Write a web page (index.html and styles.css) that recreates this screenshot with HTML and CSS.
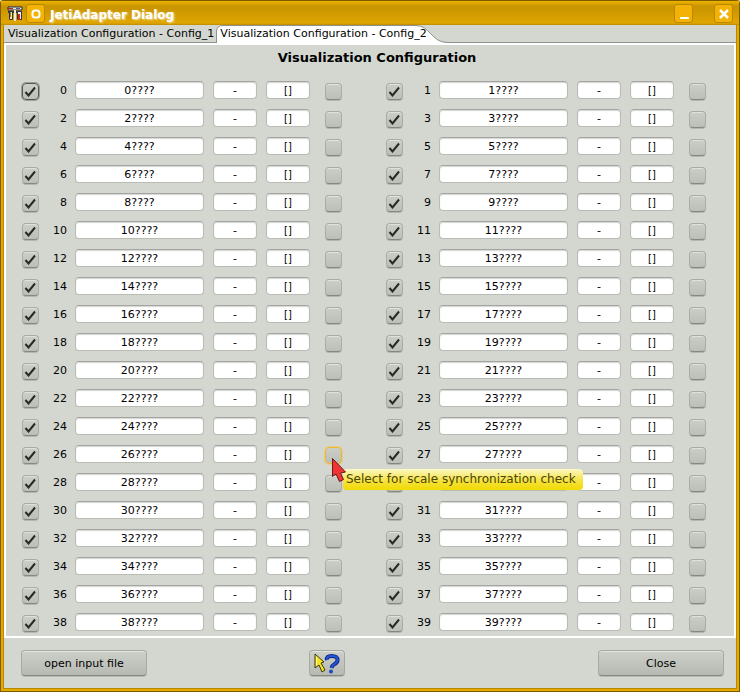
FILE: index.html
```html
<!DOCTYPE html>
<html lang="en">
<head>
<meta charset="utf-8">
<title>JetiAdapter Dialog</title>
<link rel="stylesheet" href="styles.css">
</head>
<body>
<div class="window">
  <header class="titlebar">
    <svg class="app-icon" width="16" height="16" viewBox="0 0 16 16" aria-hidden="true">
      <path d="M1 1h14v3H1z" fill="#e9ebee" stroke="#26263c"/>
      <path d="M1 2h5v1H1z" fill="#b02c20"/>
      <path d="M9 2h4v1H9z" fill="#555a80"/>
      <path d="M1 5h14v2H1z" fill="#32324a"/>
      <path d="M2.500 5.500h3v8h-3z" fill="#e8e6c8" stroke="#32324a"/>
      <path d="M3 6h1v5H3z" fill="#8d8a26"/>
      <path d="M7 4h2v11H7z" fill="#f1eec8"/>
      <path d="M10.500 5.500h4v8h-4z" fill="#f0f0f0" stroke="#32324a"/>
      <path d="M11 8h2v6h-2z" fill="#c42a26"/>
    </svg>
    <button class="win-btn" type="button" aria-label="Window menu">
      <svg width="16" height="16" viewBox="0 0 16 16"><rect x="4.500" y="4.500" width="7" height="7" rx="2.500" fill="none" stroke="#fff" stroke-width="2"/></svg>
    </button>
    <h1 class="title">JetiAdapter Dialog</h1>
    <button class="win-btn minimize" type="button" aria-label="Minimize">
      <svg width="16" height="16" viewBox="0 0 16 16"><path d="M4 12h9" stroke="#fff" stroke-width="2"/></svg>
    </button>
    <button class="win-btn" type="button" aria-label="Close window">
      <svg width="16" height="16" viewBox="0 0 16 16"><path d="M4 4l8 8M12 4l-8 8" stroke="#fff" stroke-width="2.500"/></svg>
    </button>
  </header>
  <nav class="tabs" role="tablist">
    <button class="tab" type="button" role="tab" aria-selected="false">Visualization Configuration - Config_1</button>
    <button class="tab active" type="button" role="tab" aria-selected="true">
      <svg class="tab-shape" width="232" height="18" viewBox="0 0 232 18" aria-hidden="true">
        <path d="M.5 18V6Q1 .5 7 .5H200C214 .5 215 17 231 17.500V18z" fill="#fff"/>
        <path d="M.5 18V6Q1 .5 7 .5H200C214 .5 215 17 231 17.500" fill="none" stroke="#8f928b"/>
      </svg>
      <span class="tab-text">Visualization Configuration - Config_2</span>
    </button>
  </nav>
  <main class="pane" role="tabpanel">
    <h2 class="heading">Visualization Configuration</h2>
    <div class="channels" id="channels"></div>
  </main>
  <footer class="actions">
    <button class="action" type="button">open input file</button>
    <button class="help" type="button" aria-label="Help">
      <svg width="28" height="22" viewBox="0 0 28 22">
        <path d="M2 2l9 8-3 1 4 7-3 2-3-7-4 3z" fill="#f4e522" stroke="#39380c"/>
        <path d="M3.500 5v8" stroke="#fffba0"/>
        <path d="M14 8Q13 4 18.500 4Q25 4 24.500 8.500Q24 11 21 12.500Q19 13.500 18.500 16" fill="none" stroke="#102a80" stroke-width="4"/>
        <path d="M14 8Q13 4 18.500 4Q25 4 24.500 8.500Q24 11 21 12.500Q19 13.500 18.500 16" fill="none" stroke="#2356dc" stroke-width="2"/>
        <circle cx="18" cy="19.500" r="2" fill="#1d49c4"/>
      </svg>
    </button>
    <button class="action close" type="button">Close</button>
  </footer>
</div>
<script src="channels.js"></script>
</body>
</html>
```
FILE: styles.css
```css
* { box-sizing: border-box; }

body {
  margin: 0;
  background: #d4d7d0;
  color: #000;
  font-family: "DejaVu Sans", sans-serif;
  font-size: 11px;
}

button, input { font: inherit; color: inherit; margin: 0; padding: 0; }
svg { display: block; }

.window {
  display: flex;
  flex-direction: column;
  min-height: 100vh;
  padding: 1px 4px 4px;
  background: #d4d7d0;
  border-radius: 4px 4px 0 0;
  box-shadow: inset 0 0 0 1px #7d5c00, inset 0 0 0 3px #e5aa00, inset 0 0 0 4px #b98700;
}

.titlebar {
  display: flex;
  align-items: center;
  height: 24px;
  margin: 0 -3px;
  padding: 1px 6px 0;
  background: linear-gradient(#f0b400 0, #c99500 5px, #c99500 7px, #e0a600 22px, #bd8b00 24px);
}

.app-icon { margin-right: 3px; }

.win-btn {
  display: grid;
  place-items: center;
  width: 19px;
  height: 19px;
  background: #f3b306;
  border: 1px solid #bd8700;
  border-radius: 3px;
}

.minimize { margin-right: 21px; }

.title {
  flex: 1;
  margin: 3px 0 0 5px;
  color: #fff;
  font-size: 12px;
  line-height: 16px;
  text-shadow: 1px 1px 2px #f7e3a8;
}

.tabs {
  display: flex;
  height: 18px;
  border-bottom: 1px solid #8f928b;
}

.tab {
  position: relative;
  height: 18px;
  padding: 0 2px 0 4px;
  border: 0;
  background: none;
  line-height: 18px;
  white-space: nowrap;
}

.tab-shape { position: absolute; left: 0; top: 0; }
.tab-text { position: relative; }

.pane {
  border: 2px solid #fff;
  padding: 0 28px 0 16px;
}

.heading {
  margin: 0;
  padding: 5px 0 10px 26px;
  font-size: 13px;
  line-height: 16px;
  text-align: center;
}

.channels {
  display: grid;
  grid-template-columns: 1fr 1fr;
  column-gap: 44px;
}

.channel {
  display: flex;
  align-items: center;
  height: 28px;
}

.number {
  width: 36px;
  padding-right: 8px;
  text-align: right;
}

.field {
  width: 44px;
  height: 18px;
  margin-right: 9px;
  background: #fff;
  border: 1px solid #b9bbb5;
  border-top-color: #a3a5a0;
  border-radius: 4px;
  box-shadow: inset 0 1px 1px #d5d5d5;
  text-align: center;
}

.name { flex: 1; min-width: 0; }
.unit { margin-right: 15px; font-size: 10px; }

.check {
  position: relative;
  width: 17px;
  height: 17px;
  margin-top: 3px;
}

.check input {
  display: block;
  appearance: none;
  width: 17px;
  height: 17px;
  border: 1px solid #a9aba5;
  border-bottom-color: #858781;
  border-radius: 4px;
  background: linear-gradient(#cbcdc7, #bcbeb8);
  box-shadow: inset 0 1px 0 #e0e2dc, 0 1px 0 #b3b5af;
}

.check input.focused {
  border-color: #555751;
  box-shadow: 0 0 0 1px #9a9c96;
}

.check input.hovered {
  border-color: #eeb82a;
  box-shadow: 0 0 0 1px #e2ce8b;
}

.tick { position: absolute; left: 2px; top: 3px; pointer-events: none; }

.pointer {
  position: absolute;
  z-index: 3;
  left: 7px;
  top: 11px;
}

.tooltip {
  position: absolute;
  z-index: 2;
  left: 18px;
  top: 22px;
  padding: 0 7px 0 3px;
  border-radius: 4px;
  background: linear-gradient(#fbf8c4, #f5e13a 60%, #f1da00);
  color: #4b4500;
  font-size: 12px;
  line-height: 21px;
  white-space: nowrap;
}

.actions {
  display: grid;
  grid-template-columns: 126px 1fr 126px;
  align-items: center;
  padding: 12px 12px 0 17px;
}

.action, .help {
  height: 26px;
  border: 1px solid #a7a9a3;
  border-bottom-color: #858781;
  border-radius: 4px;
  background: linear-gradient(#cdcfc9, #b7b9b3);
  box-shadow: inset 0 1px 0 #e2e4de, 0 1px 0 #b7b9b3;
}

.help {
  display: grid;
  place-items: center;
  justify-self: center;
  width: 36px;
  margin-right: 92px;
}
```
FILE: channels.js
```js
const list = document.getElementById("channels");
const hoveredChannel = 26;

const tick = `<svg class="tick" width="13" height="11" viewBox="0 0 13 11" aria-hidden="true">
  <path d="M1.500 6L4.500 9.500L11 1.500" fill="none" stroke="#282a26" stroke-width="2"/></svg>`;

const hint = `<svg class="pointer" width="15" height="26" viewBox="0 0 15 26" aria-hidden="true">
  <path d="M.5 .5V18.500L4 16L7.500 23.500L11.500 21.500L8.500 15L13.500 14Z" fill="#f03434" stroke="#6a1818"/></svg>
  <span class="tooltip" role="tooltip">Select for scale synchronization check</span>`;

for (let n = 0; n < 40; n++) {
  const row = document.createElement("div");
  const hovered = n === hoveredChannel;
  row.className = "channel";
  row.innerHTML = `
    <span class="check"><input type="checkbox" id="visible-${n}" ${n === 0 ? 'class="focused"' : ""} checked>${tick}</span>
    <label class="number" for="visible-${n}">${n}</label>
    <input class="field name" type="text" aria-label="Name ${n}" value="${n}????">
    <input class="field" type="text" aria-label="Symbol ${n}" value="-">
    <input class="field unit" type="text" aria-label="Unit ${n}" value="[]">
    <span class="check"><input type="checkbox" aria-label="Scale synchronization ${n}" ${hovered ? 'class="hovered"' : ""}>${hovered ? hint : ""}</span>`;
  list.append(row);
}
```
